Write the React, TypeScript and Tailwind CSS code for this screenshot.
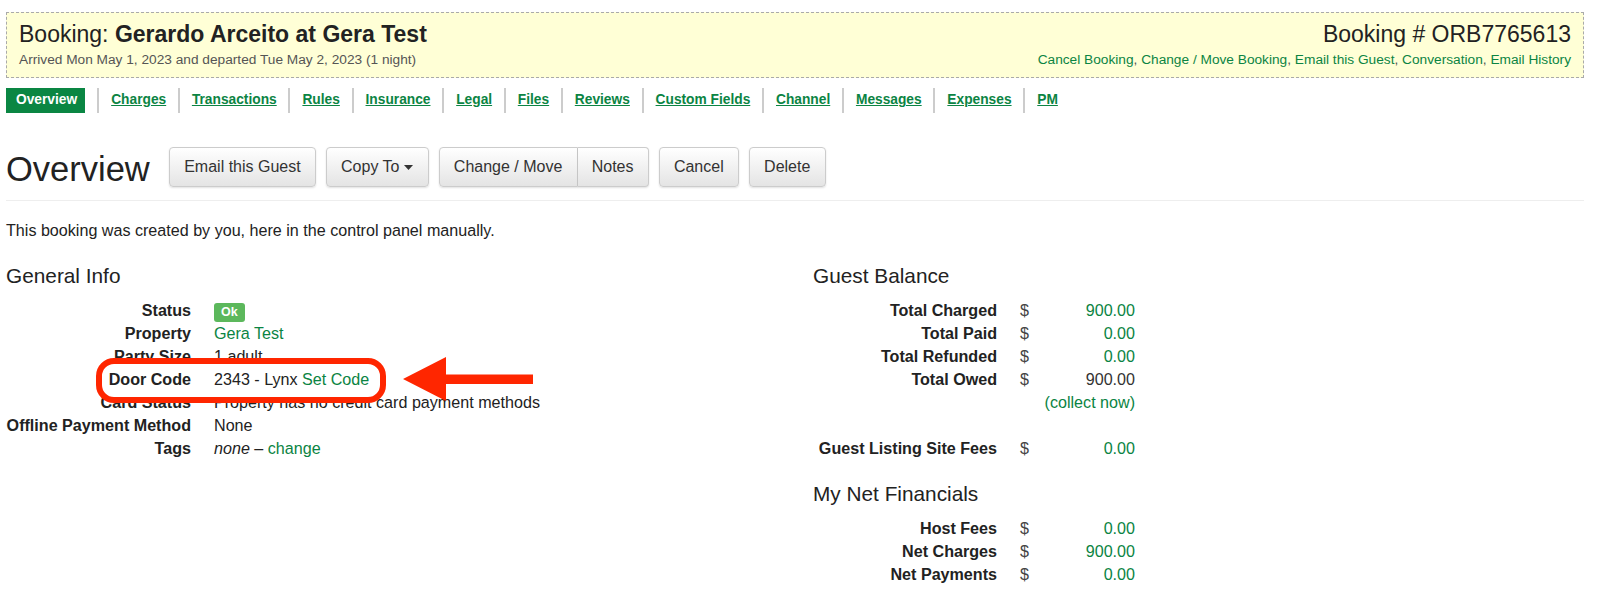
import React from "react";

const tabs = ["Charges", "Transactions", "Rules", "Insurance", "Legal", "Files", "Reviews", "Custom Fields", "Channel", "Messages", "Expenses", "PM"];
const links = ["Cancel Booking", "Change / Move Booking", "Email this Guest", "Conversation", "Email History"];
const btn = "h-10 px-[14.2px] flex items-center text-[16px] text-[#333] bg-gradient-to-b from-white to-[#e4e4e4] border border-[#ccc] shadow-[0_1px_2px_rgba(0,0,0,0.12)]";

function Label({ children }: { children: React.ReactNode }) {
  return <div className="w-[185px] shrink-0 text-right font-bold text-[#222]">{children}</div>;
}

function InfoRow({ label, children }: { label: string; children: React.ReactNode }) {
  return (
    <div className="flex h-[23px] items-center gap-[23px]">
      <Label>{label}</Label>
      <div className="whitespace-nowrap">{children}</div>
    </div>
  );
}

function Money({ label, value, green = true }: { label: string; value: string; green?: boolean }) {
  return (
    <div className="flex h-[23px] items-center">
      <div className="w-[184px] text-right font-bold text-[#222]">{label}</div>
      <div className="w-[24px] ml-[23px] text-[#444]">$</div>
      <div className={`w-[91px] text-right ${green ? "text-[#0b8443]" : "text-[#333]"}`}>{value}</div>
    </div>
  );
}

export default function App() {
  return (
    <div className="h-[591px] overflow-hidden bg-white pl-[6px] pr-[16px] pt-3 font-['Liberation_Sans',Arial,sans-serif] text-[16.13px] text-[#222]">
      <div className="h-[66px] border border-dashed border-[#aaa] bg-[#ffffd6] pl-3 pr-3 pt-[5px] flex justify-between">
        <div>
          <div className="text-[23px] leading-[32px] text-[#222]">
            Booking: <b>Gerardo Arceito at Gera Test</b>
          </div>
          <div className="text-[13.7px] leading-[20px] text-[#555]">Arrived Mon May 1, 2023 and departed Tue May 2, 2023 (1 night)</div>
        </div>
        <div className="text-right">
          <div className="text-[23px] leading-[32px] text-[#222]">Booking # ORB7765613</div>
          <div className="text-[13.7px] leading-[20px] text-[#555]">
            {links.map((l, i) => (
              <span key={l}>
                <a className="text-[#0b8443]">{l}</a>
                {i < links.length - 1 ? ", " : ""}
              </span>
            ))}
          </div>
        </div>
      </div>

      <div className="mt-[10px] flex h-[25px] items-stretch text-[13.75px] font-bold">
        <div className="flex items-center bg-[#0a8643] pl-[10px] pr-[8px] text-white mr-3">Overview</div>
        {tabs.map((t) => (
          <div key={t} className="flex items-center border-l-2 border-[#ccc] pl-3 pr-[11.7px]">
            <a className="text-[#0b8443] underline">{t}</a>
          </div>
        ))}
      </div>

      <div className="mt-[34px] flex h-[54px] items-start border-b border-[#eee]">
        <h1 className="mt-[2px] w-[163px] text-[34.5px] leading-[40px] text-[#222]">Overview</h1>
        <div className="flex gap-[10px]">
          <div className={`${btn} rounded`}>Email this Guest</div>
          <div className={`${btn} rounded gap-[5px]`}>
            Copy To
            <svg width="9" height="5" viewBox="0 0 9 5"><path d="M0 0h9L4.500 5z" fill="#333" /></svg>
          </div>
          <div className="flex">
            <div className={`${btn} rounded-l`}>Change / Move</div>
            <div className={`${btn} rounded-r border-l-0`}>Notes</div>
          </div>
          <div className={`${btn} rounded`}>Cancel</div>
          <div className={`${btn} rounded`}>Delete</div>
        </div>
      </div>

      <p className="mt-[18px] leading-[23px]">This booking was created by you, here in the control panel manually.</p>

      <div className="mt-[20px] flex">
        <div className="w-[807px] shrink-0">
          <h2 className="text-[20.8px] leading-[28px] text-[#222]">General Info</h2>
          <div className="mt-[9px]">
            <InfoRow label="Status">
              <span className="inline-block rounded-[3px] bg-[#5cb85c] px-[7px] py-[2px] text-[12.5px] leading-[15px] font-bold text-white">Ok</span>
            </InfoRow>
            <InfoRow label="Property"><a className="text-[#0b8443]">Gera Test</a></InfoRow>
            <InfoRow label="Party Size">1 adult</InfoRow>
            <div className="relative">
              <div className="absolute left-[90px] top-[-10px] h-[45px] w-[290px] rounded-[18px] border-[6px] border-[#ff2600] bg-white" />
              <div className="relative">
                <InfoRow label="Door Code">2343 - Lynx <a className="text-[#0b8443]">Set Code</a></InfoRow>
              </div>
              <svg className="absolute left-[397px] top-[-11px]" width="132" height="44" viewBox="0 0 132 44">
                <path d="M0 22 43 0V17.500H130V27H43V44z" fill="#ff2600" />
              </svg>
            </div>
            <InfoRow label="Card Status">Property has no credit card payment methods</InfoRow>
            <InfoRow label="Offline Payment Method">None</InfoRow>
            <InfoRow label="Tags"><i>none</i> – <a className="text-[#0b8443]">change</a></InfoRow>
          </div>
        </div>
        <div className="w-[322px]">
          <h2 className="text-[20.8px] leading-[28px] text-[#222]">Guest Balance</h2>
          <div className="mt-[9px]">
            <Money label="Total Charged" value="900.00" />
            <Money label="Total Paid" value="0.00" />
            <Money label="Total Refunded" value="0.00" />
            <Money label="Total Owed" value="900.00" green={false} />
            <div className="flex h-[23px] items-center justify-end text-[#0b8443]">(collect now)</div>
            <div className="h-[23px]" />
            <Money label="Guest Listing Site Fees" value="0.00" />
          </div>
          <h2 className="mt-[20px] text-[20.8px] leading-[28px] text-[#222]">My Net Financials</h2>
          <div className="mt-[9px]">
            <Money label="Host Fees" value="0.00" />
            <Money label="Net Charges" value="900.00" />
            <Money label="Net Payments" value="0.00" />
          </div>
        </div>
      </div>
    </div>
  );
}
